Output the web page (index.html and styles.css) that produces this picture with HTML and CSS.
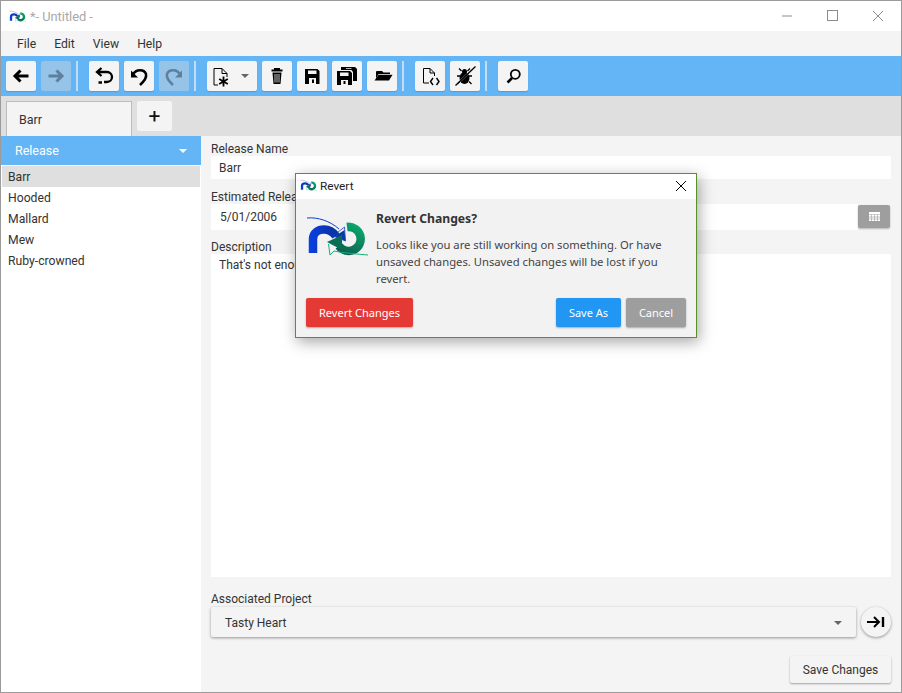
FILE: index.html
```html
<!DOCTYPE html>
<html lang="en">
<head>
  <meta charset="UTF-8" />
  <title>Untitled</title>
  <link rel="stylesheet" href="styles.css">
</head>
<body>
  <svg class="defs" width="0" height="0">
    <defs>
      <linearGradient id="archFill" gradientUnits="userSpaceOnUse" x1="10" y1="30" x2="42" y2="28">
        <stop offset="0" stop-color="#0a3fe0"/>
        <stop offset="1" stop-color="#0b2f90"/>
      </linearGradient>
      <linearGradient id="ringFill" gradientUnits="userSpaceOnUse" x1="56" y1="14" x2="40" y2="42">
        <stop offset="0" stop-color="#0aa86c"/>
        <stop offset="1" stop-color="#0a5f50"/>
      </linearGradient>
    </defs>
    <symbol id="logo" viewBox="0 0 70 55">
      <path d="M13 43V29C13 23 18 19.500 24 19.500C29 19.500 33 22 36 26" fill="none" stroke="url(#archFill)" stroke-width="8.500"/>
      <path d="M7 8C18 7 30 11 39 19" fill="none" stroke="#0a3fd0" stroke-width="1"/>
      <path d="M44.500 17L45.500 31L33 26Z" fill="none" stroke="#0a3fd0" stroke-width=".8"/>
      <path d="M44.500 20L45.500 31L34.500 26.500Z" fill="#0b3aa8"/>
      <path d="M47 17A12 12 0 1 1 39 36" fill="none" stroke="url(#ringFill)" stroke-width="8.500"/>
      <path d="M27 32L42 25V40Z" fill="#0a6d55"/>
      <path d="M28.500 34L30 45L34 41C44 43 56 44 68 45" fill="none" stroke="#17b07a" stroke-width="1"/>
    </symbol>
  </svg>

  <div class="window">
    <header class="titlebar">
      <svg class="title-logo"><use href="#logo"/></svg>
      <span class="title-text">*- Untitled -</span>
      <div class="win-controls">
        <svg width="12" height="12" viewBox="0 0 12 12"><path d="M0 6H10" stroke="#8c8c8c"/></svg>
        <svg width="12" height="12" viewBox="0 0 12 12"><rect x=".5" y=".5" width="10" height="10" fill="none" stroke="#8c8c8c"/></svg>
        <svg width="12" height="12" viewBox="0 0 12 12"><path d="M1 1L11 11M11 1L1 11" stroke="#8c8c8c"/></svg>
      </div>
    </header>

    <nav class="menubar">
      <span>File</span><span>Edit</span><span>View</span><span>Help</span>
    </nav>

    <div class="toolbar">
      <button class="tool"><svg viewBox="0 0 30 30"><path d="M22.500 15H10M14.500 9.500L9 15L14.500 20.500" fill="none" stroke="#000" stroke-width="3"/></svg></button>
      <button class="tool off"><svg viewBox="0 0 30 30"><path d="M7.500 15H20M15.500 9.500L21 15L15.500 20.500" fill="none" stroke="#5f7f9c" stroke-width="3"/></svg></button>
      <i class="sep"></i>
      <button class="tool"><svg viewBox="0 0 30 30"><path d="M12.500 7L8 11L12.500 15M8 11H18A5 5 0 0 1 18 21H15M9.500 21.500H13" fill="none" stroke="#000" stroke-width="2.300"/></svg></button>
      <button class="tool"><svg viewBox="0 0 30 30"><path d="M7 9.500V16.500H14Z"/><path d="M9 13.500C12 8 20 8 22 13C23 17 20 20 16 24" fill="none" stroke="#000" stroke-width="2.500"/></svg></button>
      <button class="tool off"><svg viewBox="0 0 30 30"><path d="M23 9.500V16.500H16Z" fill="#5f7f9c"/><path d="M21 13.500C18 8 10 8 8 13C7 17 10 20 14 24" fill="none" stroke="#5f7f9c" stroke-width="2.500"/></svg></button>
      <i class="sep"></i>
      <button class="tool split">
        <svg viewBox="0 0 30 30"><path d="M7 7.500H15L20 12.500V16M15 7.500V12.500H20M7 7.500V24H11" fill="none" stroke="#000"/><path d="M16.500 15.500V25.500M12.200 18L20.800 23M20.800 18L12.200 23" stroke="#000" stroke-width="1.800"/></svg>
        <b class="caret dark"></b>
      </button>
      <button class="tool"><svg viewBox="0 0 30 30"><path d="M12 7H18V8.500H20.500V10.500H9.500V8.500H12Z"/><path d="M10.500 11.500H19.500L18.500 23H11.500Z"/><path d="M13 13V21.500M15 13V21.500M17 13V21.500" stroke="#f4f4f4" stroke-width=".8"/></svg></button>
      <button class="tool"><svg viewBox="0 0 30 30"><path d="M8 8H20.500L22.500 10V23H8ZM11 9.500V13H19.500V9.500ZM12 17V23H19V17Z" fill-rule="evenodd"/><path d="M15 18.500H17V22H15Z"/></svg></button>
      <button class="tool"><svg viewBox="0 0 30 30"><path d="M9 6H23L25 8V20H21V11L19.500 9H9ZM14 7.200V8H19.500V7.200Z" fill-rule="evenodd"/><path d="M5 10H18L20 12V24H5ZM8 11.500V15H16.500V11.500ZM9 19V24H16V19Z" fill-rule="evenodd"/><path d="M11.500 20H13.500V23H11.500Z"/></svg></button>
      <button class="tool"><svg viewBox="0 0 30 30"><path d="M9.500 10H15L16.500 11.500H23V13H11.500L9 17.500V11Z"/><path d="M11.500 13.800H25.500L22 19.500H7.500Z"/></svg></button>
      <i class="sep"></i>
      <button class="tool"><svg viewBox="0 0 30 30"><path d="M8.500 7.500H15L19.500 12V15M15 7.500V12H19.500M8.500 7.500V22H14" fill="none" stroke="#000"/><path d="M18 17L15.500 20.500L18 24M21.500 17L24 20.500L21.500 24" fill="none" stroke="#000" stroke-width="1.400"/></svg></button>
      <button class="tool"><svg viewBox="0 0 30 30"><ellipse cx="14.500" cy="17" rx="5" ry="6"/><circle cx="14.500" cy="10.500" r="2.500"/><path d="M9 7.500L11.500 10M20 7.500L17.500 10M7 15H10M19 15H22M7.500 23L10 20.500M21.500 23L19 20.500" stroke="#000" stroke-width="1.300"/><path d="M5.500 24.500L25.500 5.500" stroke="#f4f4f4" stroke-width="2.400" opacity=".45"/><path d="M5.500 24.500L25.500 5.500" stroke="#000" stroke-width="1.300"/></svg></button>
      <i class="sep"></i>
      <button class="tool"><svg viewBox="0 0 30 30"><circle cx="17.300" cy="13.300" r="4.500" fill="none" stroke="#000" stroke-width="1.800"/><path d="M14 17L9.500 21.500" stroke="#000" stroke-width="2.600"/></svg></button>
    </div>

    <div class="tabbar">
      <div class="tab">Barr</div>
      <button class="tab-add">+</button>
    </div>

    <div class="content">
      <aside class="sidebar">
        <div class="side-head">Release <b class="caret white"></b></div>
        <ul class="side-list">
          <li class="selected">Barr</li>
          <li>Hooded</li>
          <li>Mallard</li>
          <li>Mew</li>
          <li>Ruby-crowned</li>
        </ul>
      </aside>

      <main class="form">
        <label>Release Name</label>
        <div class="field name-field">Barr</div>

        <label class="gap-label">Estimated Release Date</label>
        <div class="date-row">
          <div class="field date-field">5/01/2006</div>
          <button class="date-btn">
            <svg width="11" height="9" viewBox="0 0 11 9"><path d="M0 0H11V2H0Z" fill="#fff"/><path d="M0 2.500H11V9H0Z" fill="#fff"/><path d="M2.500 2.500V9M5.500 2.500V9M8.500 2.500V9M0 5H11M0 7H11" stroke="#9e9e9e" stroke-width=".6"/></svg>
          </button>
        </div>

        <label class="desc-label">Description</label>
        <div class="field desc-field">That's not enough</div>

        <label class="project-label">Associated Project</label>
        <div class="project-row">
          <div class="combo">Tasty Heart <b class="caret dark"></b></div>
          <button class="round-btn"><svg width="20" height="14" viewBox="0 0 20 14"><path d="M1 7H13M8 2L13 7L8 12" fill="none" stroke="#000" stroke-width="2"/><path d="M17 2V12" stroke="#000" stroke-width="2.400"/></svg></button>
        </div>

        <div class="save-row"><button class="save-btn">Save Changes</button></div>
      </main>
    </div>

    <div class="dialog">
      <div class="dialog-title">
        <svg class="title-logo"><use href="#logo"/></svg>
        <span>Revert</span>
        <svg class="dialog-close" width="12" height="12" viewBox="0 0 12 12"><path d="M1 1L11 11M11 1L1 11" stroke="#000"/></svg>
      </div>
      <div class="dialog-body">
        <svg class="dialog-logo"><use href="#logo"/></svg>
        <div>
          <h2>Revert Changes?</h2>
          <p>Looks like you are still working on something. Or have unsaved changes. Unsaved changes will be lost if you revert.</p>
        </div>
      </div>
      <div class="dialog-actions">
        <button class="btn red">Revert Changes</button>
        <span class="spacer"></span>
        <button class="btn blue">Save As</button>
        <button class="btn grey">Cancel</button>
      </div>
    </div>
  </div>
</body>
</html>
```

FILE: styles.css
```css
html, body {
  margin: 0;
  height: 100%;
  overflow: hidden;
}

body {
  font-family: Roboto, sans-serif;
  font-size: 13px;
  color: #333;
  background: #fff;
}

button {
  font-family: inherit;
  border: none;
  padding: 0;
}

.defs {
  position: absolute;
}

.window {
  position: relative;
  box-sizing: border-box;
  width: 902px;
  height: 693px;
  border: 1px solid #9b9b9b;
  display: flex;
  flex-direction: column;
  background: #f4f4f4;
}

.titlebar {
  height: 30px;
  flex: none;
  background: #fff;
  display: flex;
  align-items: center;
  padding-left: 6px;
}

.title-logo {
  width: 20px;
  height: 15px;
  flex: none;
}

.title-text {
  margin-left: 3px;
  color: #a8a8a8;
  font-size: 12.800px;
}

.win-controls {
  margin-left: auto;
  display: flex;
  gap: 33px;
  padding-right: 17px;
}

.menubar {
  height: 25px;
  flex: none;
  display: flex;
  align-items: center;
  gap: 18px;
  padding-left: 16px;
  box-sizing: border-box;
  font-size: 12.200px;
}

.toolbar {
  height: 40px;
  flex: none;
  box-sizing: border-box;
  background: #64b5f6;
  display: flex;
  align-items: center;
  padding-left: 5px;
  gap: 5px;
}

.tool {
  width: 30px;
  height: 30px;
  background: #f4f4f4;
  border-radius: 2px;
  display: flex;
  align-items: center;
  box-shadow: 0 1px 1px rgba(0,0,0,.15);
}

.tool svg {
  width: 30px;
  height: 30px;
  flex: none;
}

.tool.off {
  background: #96c3e8;
  box-shadow: none;
}

.tool.split {
  width: 50px;
  gap: 4px;
}

.sep {
  width: 2px;
  height: 30px;
  background: #c3dcf0;
}

.sep + .tool {
  margin-left: 6px;
}

.caret {
  display: inline-block;
  width: 0;
  height: 0;
  border-left: 4px solid transparent;
  border-right: 4px solid transparent;
}

.caret.dark {
  border-top: 4px solid #666;
}

.caret.white {
  border-top: 4px solid #fff;
}

.tabbar {
  height: 40px;
  flex: none;
  background: #dfdfdf;
  display: flex;
  align-items: flex-end;
  padding-left: 5px;
  gap: 5px;
}

.tab {
  box-sizing: border-box;
  width: 126px;
  height: 35px;
  background: #f4f4f4;
  border: 1px solid #bdbdbd;
  border-bottom: none;
  padding: 10px 0 0 12px;
  font-size: 12.500px;
}

.tab-add {
  width: 35px;
  height: 30px;
  margin-bottom: 5px;
  background: #f4f4f4;
  border-radius: 2px;
  font-size: 21px;
  line-height: 30px;
  color: #111;
}

.content {
  flex: 1;
  display: flex;
  min-height: 0;
}

.sidebar {
  width: 200px;
  flex: none;
  background: #fff;
}

.side-head {
  height: 29px;
  box-sizing: border-box;
  background: #64b5f6;
  color: #fff;
  font-size: 12.500px;
  display: flex;
  align-items: center;
  justify-content: space-between;
  padding: 0 14px 0 14px;
}

.side-list {
  list-style: none;
  margin: 1px 1px 0;
  padding: 0;
  font-size: 12.200px;
}

.side-list li {
  height: 21px;
  line-height: 23px;
  padding-left: 6px;
}

.side-list .selected {
  background: #dfdfdf;
}

.form {
  flex: 1;
  display: flex;
  flex-direction: column;
  padding: 5px 10px 0;
  min-width: 0;
}

.form label {
  font-size: 12px;
  line-height: 15px;
  margin-top: 1px;
  margin-bottom: -1px;
}

.form .gap-label {
  margin-top: 11px;
}

.form .desc-label {
  margin-top: 10px;
}

.form .project-label {
  margin-top: 15px;
}

.field {
  background: #fff;
  padding-left: 8px;
  font-size: 12px;
}

.name-field {
  height: 23px;
  line-height: 25px;
}

.date-row {
  display: flex;
  align-items: flex-start;
}

.date-field {
  flex: 1;
  height: 26px;
  line-height: 26px;
  padding-left: 9px;
}

.date-btn {
  width: 32px;
  height: 23px;
  margin-top: 1px;
  margin-right: 1px;
  background: #9e9e9e;
  border-radius: 2px;
  display: flex;
  align-items: center;
  justify-content: center;
  box-shadow: 0 1px 2px rgba(0,0,0,.25);
}

.desc-field {
  flex: 1;
  padding-top: 4px;
}

.project-row {
  display: flex;
  gap: 5px;
  margin-top: 1px;
}

.combo {
  flex: 1;
  height: 30px;
  box-sizing: border-box;
  background: #f4f4f4;
  border-radius: 2px;
  box-shadow: 0 1px 3px rgba(0,0,0,.4);
  display: flex;
  align-items: center;
  justify-content: space-between;
  padding: 1px 14px 0 14px;
  font-size: 12px;
}

.round-btn {
  width: 30px;
  height: 30px;
  border-radius: 50%;
  background: #f4f4f4;
  box-shadow: 0 1px 3px rgba(0,0,0,.4);
  display: flex;
  align-items: center;
  justify-content: center;
}

.save-row {
  display: flex;
  justify-content: flex-end;
  padding: 19px 0 9px;
}

.save-btn {
  width: 101px;
  height: 27px;
  background: #f4f4f4;
  border-radius: 2px;
  box-shadow: 0 1px 2px rgba(0,0,0,.35);
  font-size: 12px;
  color: #333;
}

.dialog {
  position: absolute;
  left: 294px;
  top: 172px;
  width: 402px;
  height: 165px;
  box-sizing: border-box;
  border: 1px solid #5a8f29;
  background: #f2f2f2;
  box-shadow: 2px 4px 14px rgba(0,0,0,.35);
  display: flex;
  flex-direction: column;
}

.dialog-title {
  height: 25px;
  box-sizing: border-box;
  flex: none;
  background: #fff;
  display: flex;
  align-items: center;
  padding: 0 0 2px 2px;
  gap: 2px;
  font-size: 11.800px;
  color: #222;
}

.dialog-close {
  margin-left: auto;
  margin-right: 9px;
}

.dialog-body {
  display: flex;
  padding: 11px 10px 0 4px;
  flex: 1;
  gap: 6px;
  font-family: "Noto Sans", sans-serif;
}

.dialog-logo {
  width: 70px;
  height: 55px;
  flex: none;
}

.dialog-body h2 {
  margin: 0 0 9px;
  font-size: 12.200px;
  line-height: 17px;
  font-weight: 700;
  color: #333;
}

.dialog-body p {
  margin: 0;
  font-size: 11.250px;
  line-height: 17px;
  color: #444;
}

.dialog-actions {
  display: flex;
  gap: 5px;
  padding: 0 10px 10px;
}

.spacer {
  flex: 1;
}

.btn {
  height: 29px;
  border-radius: 2px;
  color: #fff;
  font-family: "Noto Sans", sans-serif;
  font-size: 11px;
  box-shadow: 0 1px 2px rgba(0,0,0,.3);
}

.btn.red {
  width: 107px;
  background: #e53935;
}

.btn.blue {
  width: 65px;
  background: #2196f3;
}

.btn.grey {
  width: 60px;
  background: #9e9e9e;
}
```
